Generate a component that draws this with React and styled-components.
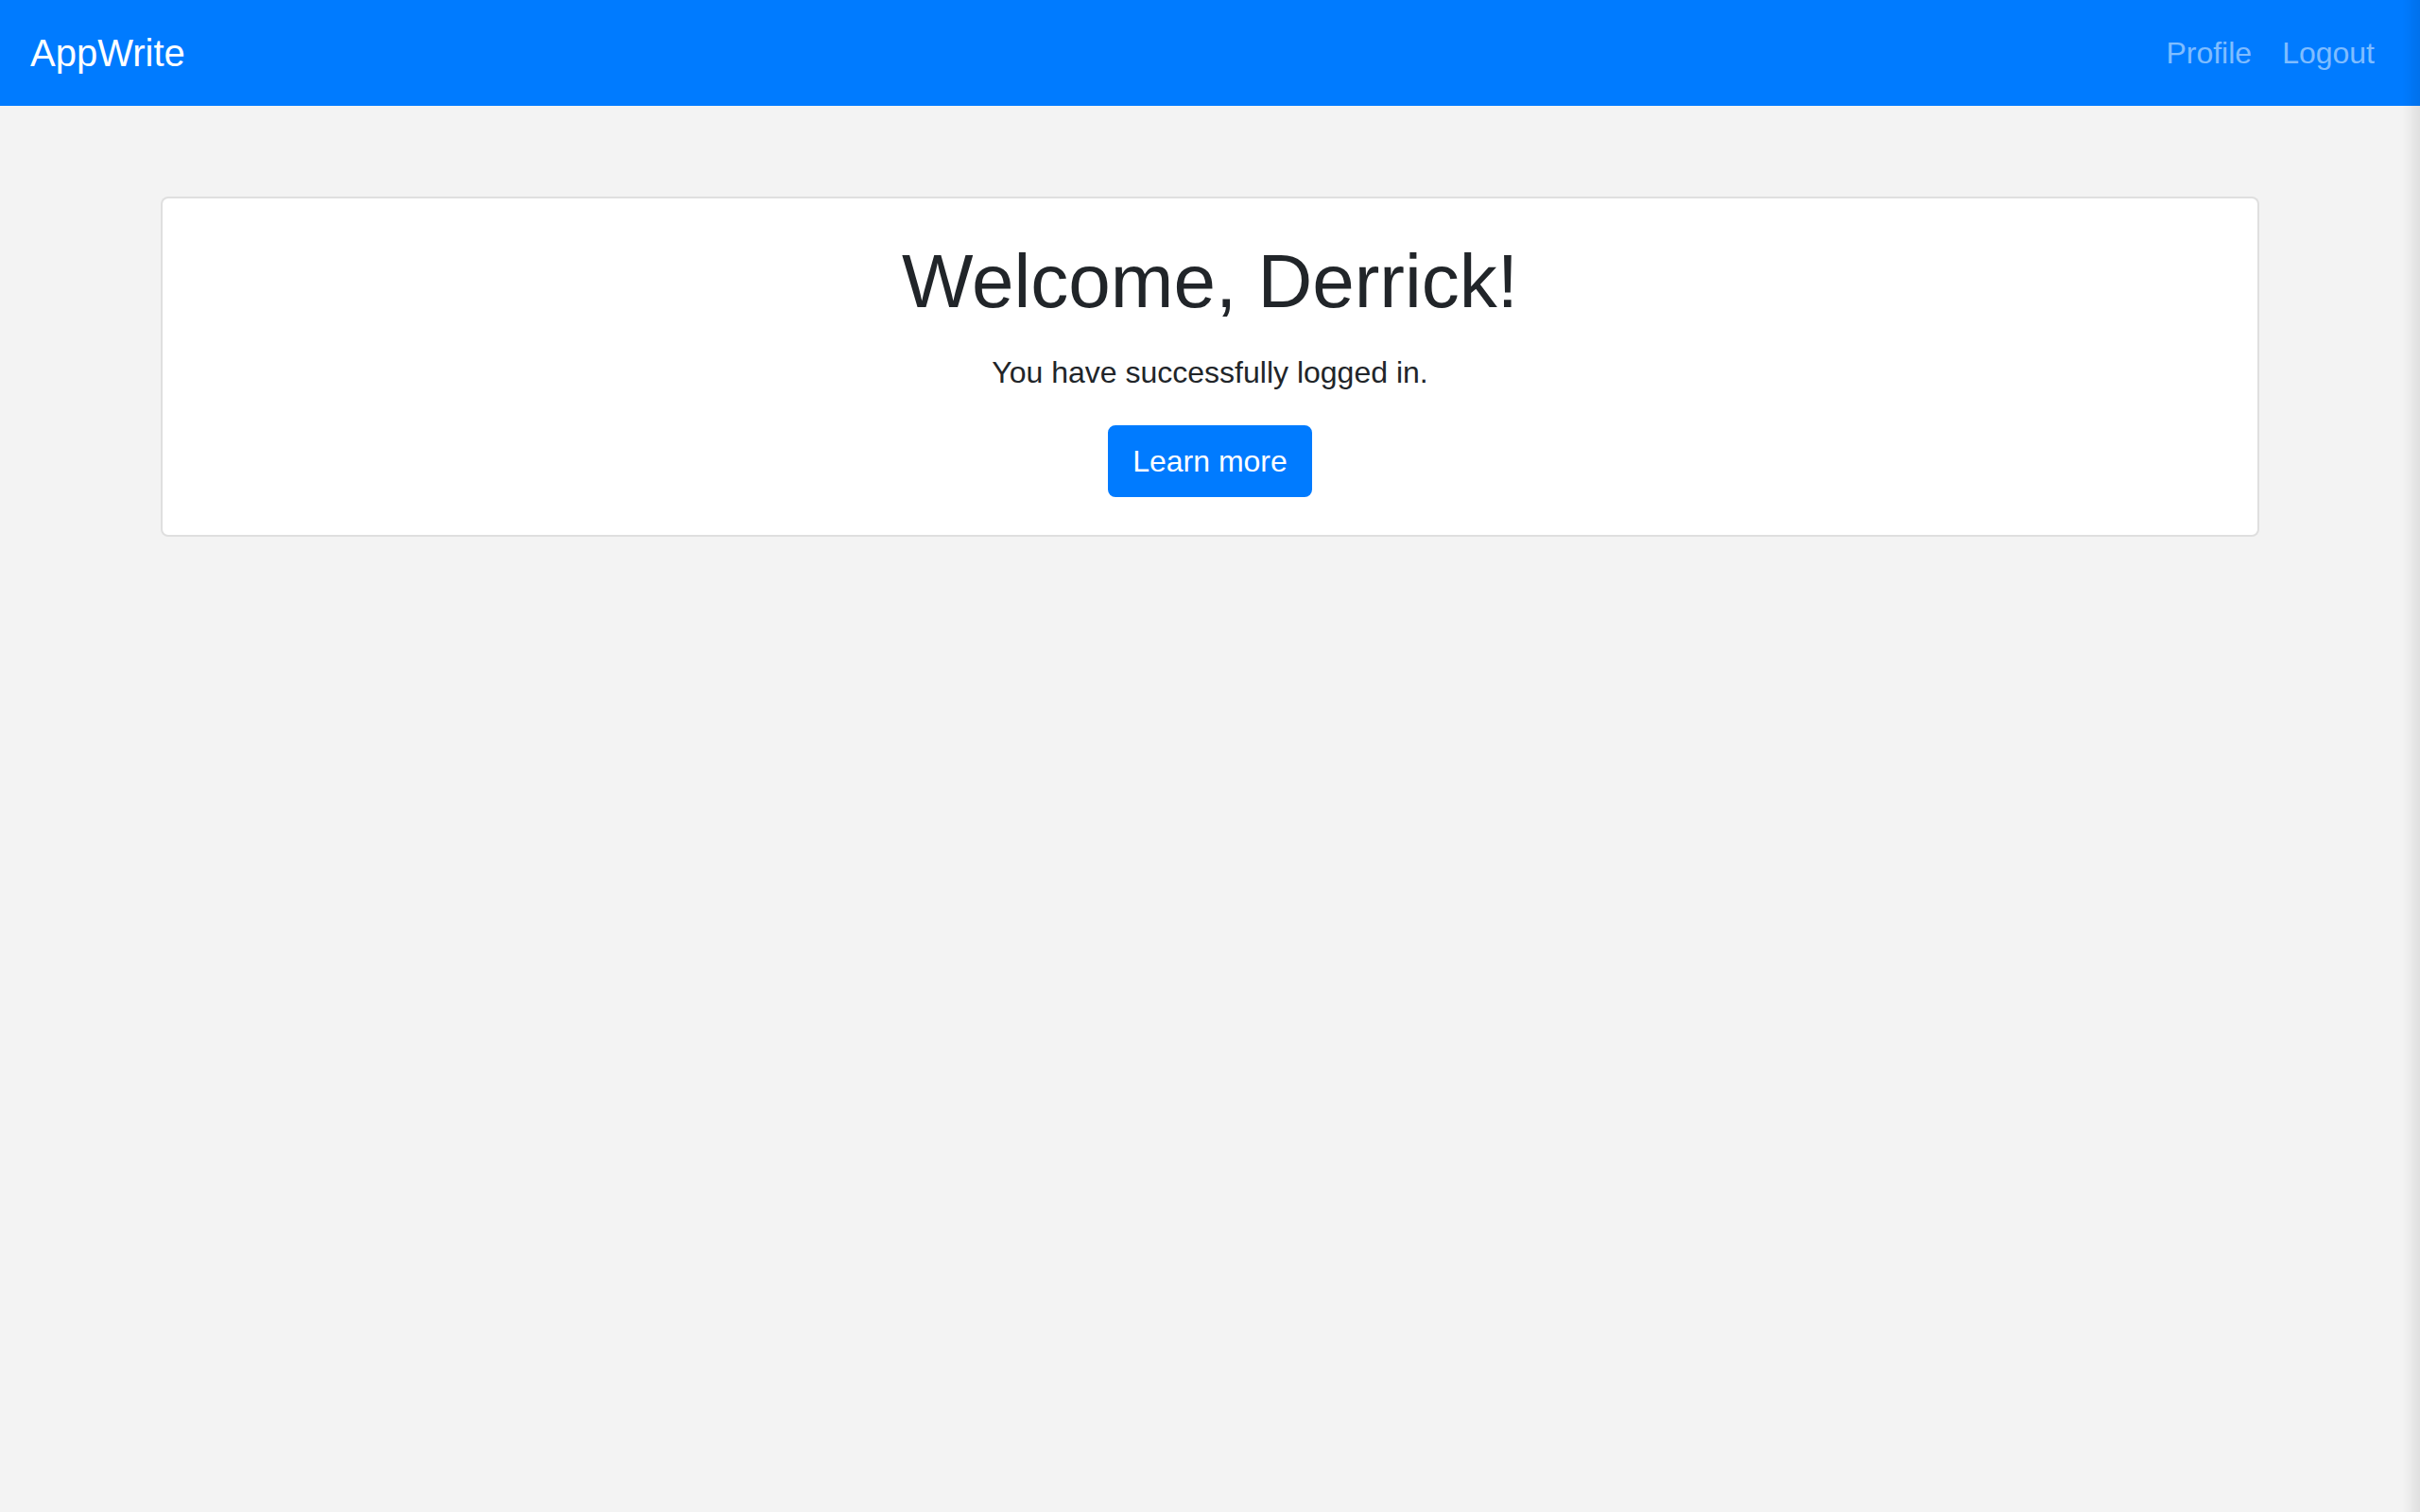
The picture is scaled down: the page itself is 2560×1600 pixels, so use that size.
import React from "react"
import styled, { createGlobalStyle } from "styled-components"

const GlobalStyle = createGlobalStyle`
  * {
    box-sizing: border-box;
  }

  body {
    margin: 0;
    min-height: 1600px;
    background: #f3f3f3;
    color: #212529;
    font-family: "Liberation Sans", Arial, sans-serif;
    font-size: 32px;
    line-height: 1.5;
  }

  body::after {
    content: "";
    position: fixed;
    top: 0;
    right: 0;
    width: 18px;
    height: 100vh;
    pointer-events: none;
    background: linear-gradient(to right, rgba(0, 0, 0, 0), rgba(0, 0, 0, 0.08));
  }
`;

const Navbar = styled.nav`
  display: flex;
  align-items: center;
  justify-content: space-between;
  height: 112px;
  padding: 16px 32px;
  background: #007bff;
`;

const Brand = styled.a`
  padding: 10px 0;
  font-size: 40px;
  line-height: 60px;
  color: #fff;
  text-decoration: none;
`;

const NavLinks = styled.ul`
  display: flex;
  margin: 0;
  padding: 0;
  list-style: none;
`;

const NavLink = styled.a`
  display: block;
  padding: 16px;
  line-height: 48px;
  color: rgba(255, 255, 255, 0.5);
  text-decoration: none;

  &:last-child {
    padding-right: 16px;
  }
`;

const Container = styled.main`
  width: 2280px;
  margin: 96px auto 0;
  padding: 0 30px;
`;

const Card = styled.section`
  display: flex;
  flex-direction: column;
  align-items: center;
  padding: 40px;
  background: #fff;
  border: 2px solid rgba(0, 0, 0, 0.125);
  border-radius: 8px;
  text-align: center;
`;

const Title = styled.h1`
  margin: 0 0 24px;
  font-size: 80px;
  font-weight: 400;
  line-height: 1.2;
`;

const Lead = styled.p`
  margin: 0 0 32px;
  font-size: 32px;
  line-height: 48px;
`;

const Button = styled.a`
  display: inline-block;
  padding: 12px 24px;
  font-size: 32px;
  line-height: 48px;
  color: #fff;
  background: #007bff;
  border: 2px solid #007bff;
  border-radius: 8px;
  text-decoration: none;
`;

export default function App() {
  return (
    <>
      <GlobalStyle />
      <Navbar>
        <Brand href="#">AppWrite</Brand>
        <NavLinks>
          <li><NavLink href="#">Profile</NavLink></li>
          <li><NavLink href="#">Logout</NavLink></li>
        </NavLinks>
      </Navbar>
      <Container>
        <Card>
          <Title>Welcome, Derrick!</Title>
          <Lead>You have successfully logged in.</Lead>
          <Button href="#">Learn more</Button>
        </Card>
      </Container>
    </>
  )
}
